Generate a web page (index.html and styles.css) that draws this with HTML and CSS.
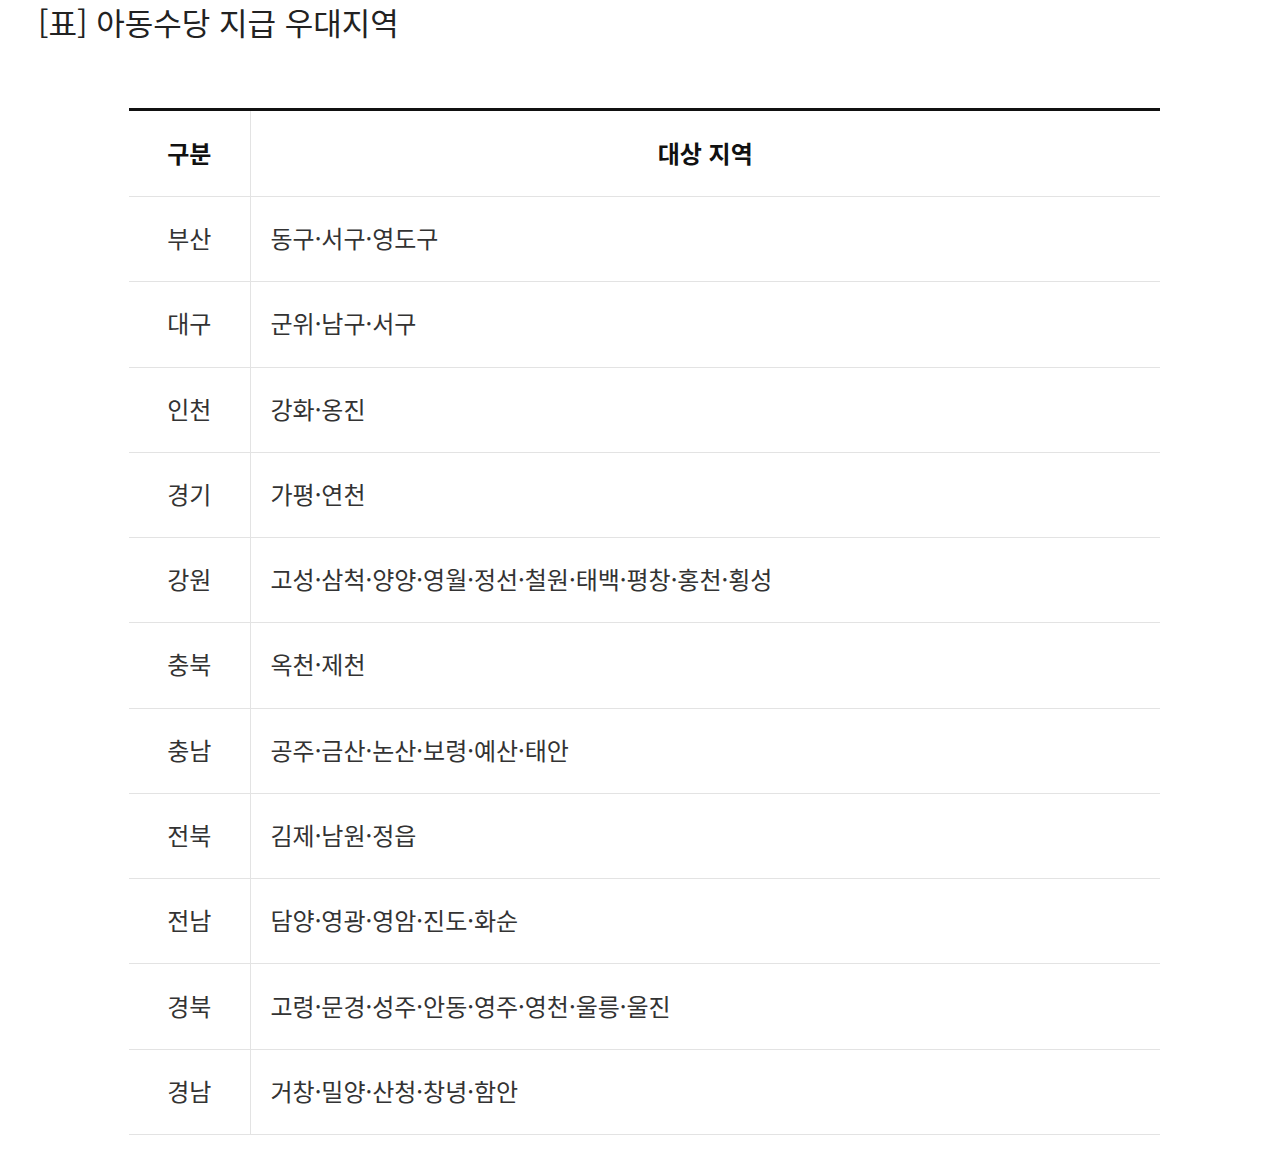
FILE: index.html
```html
<!DOCTYPE html>
<html lang="ko">
<head>
<meta charset="utf-8">
<title>아동수당 지급 우대지역</title>
<link rel="stylesheet" href="styles.css">
</head>
<body>
<h1 class="title">[표] 아동수당 지급 우대지역</h1>
<table class="region-table">
  <thead>
    <tr><th class="col-cat">구분</th><th class="col-area">대상 지역</th></tr>
  </thead>
  <tbody>
    <tr><td class="col-cat">부산</td><td class="col-area">동구·서구·영도구</td></tr>
    <tr><td class="col-cat">대구</td><td class="col-area">군위·남구·서구</td></tr>
    <tr><td class="col-cat">인천</td><td class="col-area">강화·옹진</td></tr>
    <tr><td class="col-cat">경기</td><td class="col-area">가평·연천</td></tr>
    <tr><td class="col-cat">강원</td><td class="col-area">고성·삼척·양양·영월·정선·철원·태백·평창·홍천·횡성</td></tr>
    <tr><td class="col-cat">충북</td><td class="col-area">옥천·제천</td></tr>
    <tr><td class="col-cat">충남</td><td class="col-area">공주·금산·논산·보령·예산·태안</td></tr>
    <tr><td class="col-cat">전북</td><td class="col-area">김제·남원·정읍</td></tr>
    <tr><td class="col-cat">전남</td><td class="col-area">담양·영광·영암·진도·화순</td></tr>
    <tr><td class="col-cat">경북</td><td class="col-area">고령·문경·성주·안동·영주·영천·울릉·울진</td></tr>
    <tr><td class="col-cat">경남</td><td class="col-area">거창·밀양·산청·창녕·함안</td></tr>
  </tbody>
</table>
</body>
</html>
```

FILE: styles.css
```css
html, body {
  margin: 0;
  padding: 0;
  background: #fff;
}
body {
  font-family: "Noto Sans CJK KR", "Noto Sans", sans-serif;
  color: #333;
}
.title {
  margin: 0 0 0 38px;
  padding-top: 1px;
  font-size: 31px;
  font-weight: 400;
  line-height: 42px;
  color: #222;
  letter-spacing: 0;
}
.region-table {
  margin: 65px 0 0 129px;
  width: 1031px;
  border-collapse: collapse;
  border-top: 3px solid #111;
  table-layout: fixed;
}
.region-table th,
.region-table td {
  font-size: 24px;
  line-height: 30px;
  height: 85.27px;
  padding: 0 20px 2px;
  border-bottom: 1px solid #e3e3e3;
  box-sizing: border-box;
  vertical-align: middle;
}
.region-table th {
  height: 87px;
  font-weight: 700;
  color: #111;
  text-align: center;
}
.region-table .col-cat {
  width: 121px;
  text-align: center;
  border-right: 1px solid #e3e3e3;
  padding: 0 0 2px;
}
.region-table td.col-area {
  text-align: left;
  color: #333;
}
.region-table th.col-area {
  text-align: center;
}
.region-table td.col-cat {
  color: #333;
}
```
